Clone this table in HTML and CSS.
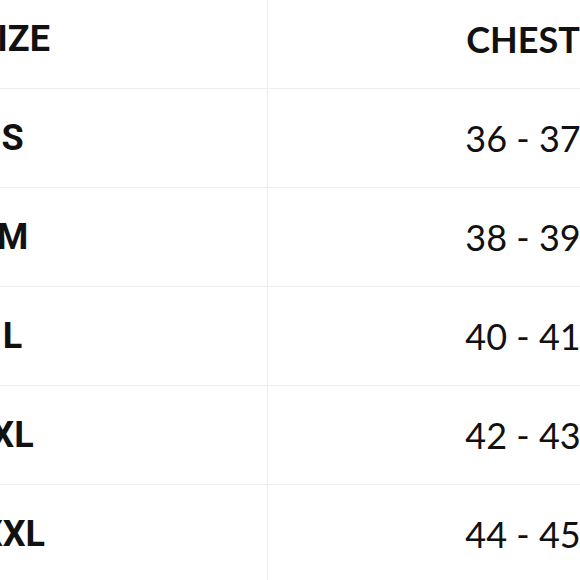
FILE: index.html
```html
<!DOCTYPE html>
<html>
<head>
<meta charset="utf-8">
<link rel="stylesheet" href="styles.css">
</head>
<body>
<div class="table">
  <div class="row head"><div class="cell size">SIZE</div><div class="cell chest">CHEST</div></div>
  <div class="row"><div class="cell size">S</div><div class="cell val">36 - 37</div></div>
  <div class="row"><div class="cell size">M</div><div class="cell val">38 - 39</div></div>
  <div class="row"><div class="cell size">L</div><div class="cell val">40 - 41</div></div>
  <div class="row"><div class="cell size">XL</div><div class="cell val">42 - 43</div></div>
  <div class="row"><div class="cell size">XXL</div><div class="cell val">44 - 45</div></div>
</div>
</body>
</html>
```
FILE: styles.css
```css
html, body {
  margin: 0;
  padding: 0;
  background: #ffffff;
  overflow: hidden;
}
body {
  width: 580px;
  height: 580px;
  font-family: "Lato", "Liberation Sans", sans-serif;
  color: #111111;
}
.table {
  margin: -10px 0 0 -242px;
  width: 1020px;
}
.row {
  display: grid;
  grid-template-columns: 510px 510px;
  height: 99px;
  box-sizing: border-box;
  border-bottom: 1px solid #ededed;
}
.cell {
  display: flex;
  align-items: center;
  justify-content: center;
  font-size: 36px;
  line-height: 1;
}
.size {
  font-family: "Roboto", "Liberation Sans", sans-serif;
  font-size: 36px;
  font-weight: 700;
  border-right: 1px solid #ededed;
}
.chest {
  font-weight: 700;
}
.val {
  font-weight: 400;
}
```
